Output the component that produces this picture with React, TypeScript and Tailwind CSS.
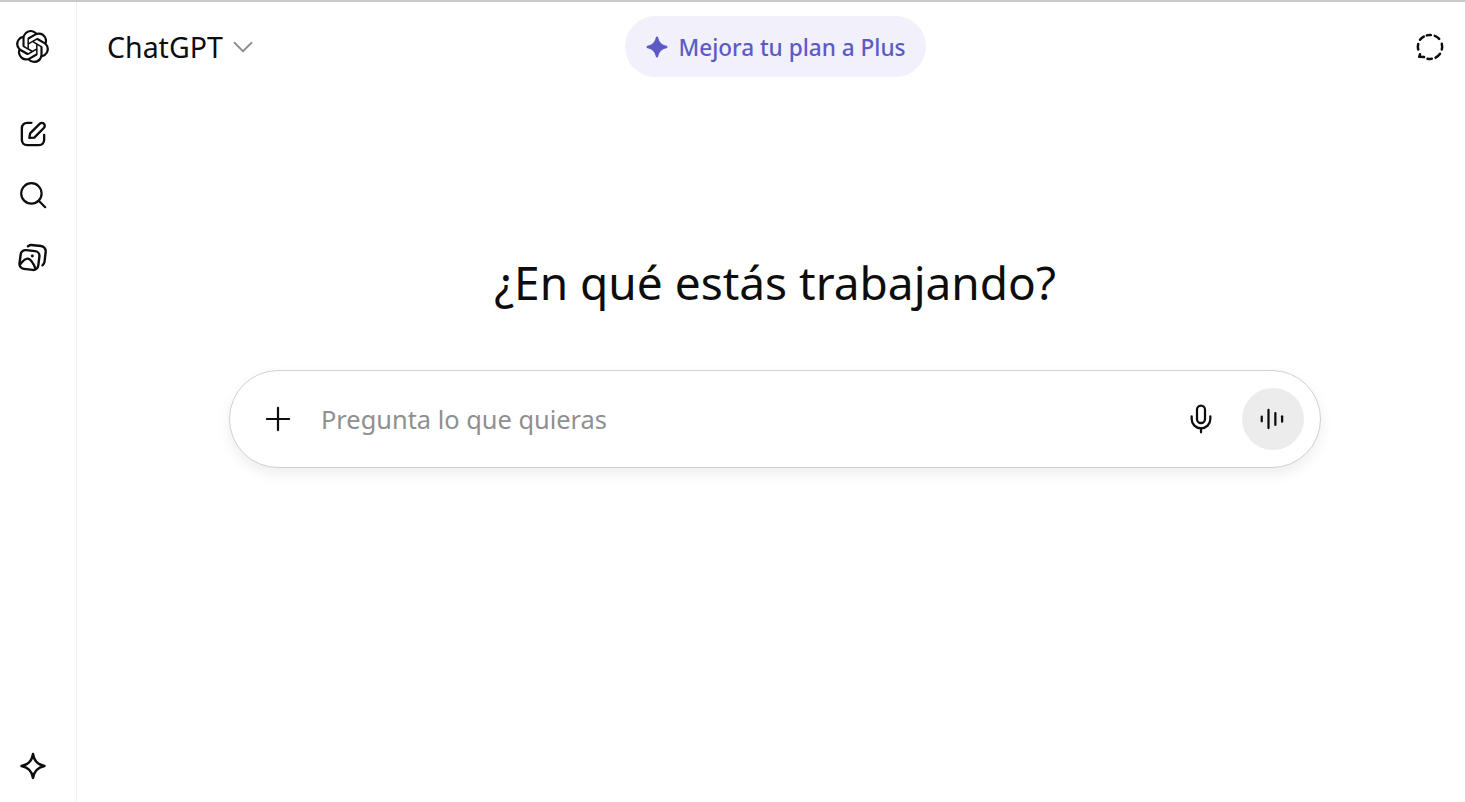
import { ChevronDown, Mic, Plus } from "lucide-react";
import { SiOpenai } from "react-icons/si";

function ComposeIcon() {
  return (
    <svg viewBox="0 0 28 28" className="h-[30px] w-[30px]" fill="none" stroke="currentColor" strokeWidth="2.2" strokeLinecap="round" strokeLinejoin="round" aria-hidden>
      <path d="M12.5 3.600H8.600C5.600 3.600 3.600 5.600 3.600 8.600v10.800c0 3 2 5 5 5h10.800c3 0 5-2 5-5v-4.600" />
      <path d="M10.600 17.600l.7-4.200 8.900-8.900c1.200-1.200 3-1.200 4 0 1.100 1.100 1 2.800-.1 3.900l-8.900 9-4.600.2z" />
    </svg>
  );
}

function SearchIcon() {
  return (
    <svg viewBox="0 0 28 28" className="h-7 w-7" fill="none" stroke="currentColor" strokeWidth="2.200" strokeLinecap="round" aria-hidden>
      <circle cx="12.400" cy="12.400" r="10.200" />
      <path d="M20 20l6.200 6.200" />
    </svg>
  );
}

function LibraryIcon() {
  return (
    <svg viewBox="0 0 28 28" className="h-[32px] w-[32px]" fill="none" stroke="currentColor" strokeWidth="2.100" strokeLinecap="round" strokeLinejoin="round" aria-hidden>
      <path d="M9.600 4.600l.6-.4c.6-.5 1.400-.8 2.200-.7l8.600.9c2.600.3 4.400 2.600 4.100 5.100l-1 8.400c-.2 1.400-.8 2.600-1.800 3.400" />
      <path d="M3.200 11.800c.3-2.400 2.400-4.100 4.800-3.800l7.800.9c2.400.3 4.100 2.400 3.800 4.800l-1 7.800c-.3 2.400-2.400 4.100-4.800 3.800l-7.800-.9c-2.400-.3-4.100-2.400-3.800-4.800l1-7.800z" />
      <path d="M2.800 20.400c2.600-3.400 5-5.200 6.800-5 2 .2 4.200 3 6.600 8.600" />
      <circle cx="13.400" cy="13.200" r="1.300" fill="currentColor" stroke="none" />
    </svg>
  );
}

function OutlineSparkle() {
  return (
    <svg viewBox="0 0 28 28" className="h-8 w-8" fill="none" stroke="currentColor" strokeWidth="2.300" strokeLinejoin="round" aria-hidden>
      <path d="M14 3.600c.9 6 3.600 8.900 10 10.400-6.400 1.500-9.100 4.400-10 10.400-.9-6-3.600-8.900-10-10.400 6.400-1.500 9.100-4.400 10-10.400z" />
    </svg>
  );
}

function FilledSparkle() {
  return (
    <svg viewBox="0 0 24 24" className="h-[24px] w-[24px]" fill="currentColor" aria-hidden>
      <path d="M12 1.500c.6 0 1 .4 1.200 1 1.200 4.900 3.400 7.100 8.300 8.300.6.200 1 .6 1 1.200s-.4 1-1 1.200c-4.900 1.200-7.100 3.400-8.300 8.300-.2.600-.6 1-1.200 1s-1-.4-1.200-1c-1.200-4.900-3.400-7.100-8.300-8.300-.6-.2-1-.6-1-1.200s.4-1 1-1.200c4.900-1.200 7.100-3.400 8.300-8.300.2-.6.6-1 1.200-1z" />
    </svg>
  );
}

function DashedCircle() {
  return (
    <svg viewBox="0 0 28 28" className="h-7 w-7" fill="none" stroke="currentColor" strokeWidth="2.500" strokeLinecap="round" aria-hidden>
      <path d="M10.800 2.400a12 12 0 0 1 4-.3" />
      <path d="M18.800 2.800a12 12 0 0 1 4.400 3" />
      <path d="M25.800 10.800a12 12 0 0 1 0 5.700" />
      <path d="M24 20.800a12 12 0 0 1-4.400 3.800" />
      <path d="M15.800 25.800a12 12 0 0 1-4.300-.1" />
      <path d="M3.400 23.800l4.600.3" />
      <path d="M3.400 23.800l.6-2.600" />
      <path d="M2.200 16.500a12 12 0 0 1 0-5.500" />
      <path d="M4 6.800a12 12 0 0 1 3.800-3.200" />
    </svg>
  );
}

function VoiceIcon() {
  return (
    <svg viewBox="0 0 28 28" className="h-[30px] w-[30px]" fill="none" stroke="currentColor" strokeWidth="2.100" strokeLinecap="round" aria-hidden>
      <path d="M3.500 11.800v4.400" />
      <path d="M9.800 5.500v17" />
      <path d="M16.200 8.500v11" />
      <path d="M22.500 11.500v5" />
    </svg>
  );
}

export default function App() {
  return (
    <div className="flex h-[802px] flex-col overflow-hidden bg-white font-['Noto_Sans',sans-serif] text-[#0d0d0d]">
      <div className="h-[2px] shrink-0 bg-[#c9c9c9]" />
      <div className="flex min-h-0 flex-1">
        <aside className="flex w-[77px] shrink-0 flex-col items-center border-r border-[#f0f0f0] pr-[11px] pb-[20px] pt-[28px]">
          <SiOpenai className="h-[33px] w-[33px]" aria-hidden />
          <nav className="mt-[56px] flex flex-col items-center gap-[32px]">
            <ComposeIcon />
            <SearchIcon />
            <LibraryIcon />
          </nav>
          <div className="mt-auto">
            <OutlineSparkle />
          </div>
        </aside>

        <main className="flex min-w-0 flex-1 flex-col">
          <header className="grid grid-cols-[1fr_auto_1fr] items-center pl-[30px] pr-[21px] pt-[14px]">
            <div className="flex items-center gap-[3px]">
              <span className="text-[28.500px] leading-[36px]">ChatGPT</span>
              <ChevronDown className="h-[34px] w-[34px] text-[#8f8f8f]" strokeWidth={1.300} aria-hidden />
            </div>
            <button className="flex h-[61px] w-[301px] items-center justify-center gap-[9px] rounded-full bg-[#f1f0fb] text-[22.600px] font-medium text-[#5c5bc6]">
              <FilledSparkle />
              <span className="pt-[3px]">Mejora tu plan a Plus</span>
            </button>
            <div className="flex justify-end">
              <DashedCircle />
            </div>
          </header>

          <section className="flex flex-col items-center pl-[8px] pt-[175px]">
            <h1 className="text-[46px] font-normal leading-[60px]">¿En qué estás trabajando?</h1>
            <div className="mt-[58px] flex h-[98px] w-[1092px] items-center rounded-full border border-[#d0d0d0] bg-white pl-[29px] pr-[16px] shadow-[0_6px_14px_rgba(0,0,0,0.07)]">
              <Plus className="h-[38px] w-[38px]" strokeWidth={1.400} aria-hidden />
              <span className="ml-[24px] flex-1 text-[25.400px] text-[#8f8f8f]">Pregunta lo que quieras</span>
              <Mic className="mr-[25px] h-[32px] w-[32px]" strokeWidth={1.700} aria-hidden />
              <div className="flex h-[62px] w-[62px] items-center justify-center rounded-full bg-[#ececec]">
                <VoiceIcon />
              </div>
            </div>
          </section>
        </main>
      </div>
    </div>
  );
}
